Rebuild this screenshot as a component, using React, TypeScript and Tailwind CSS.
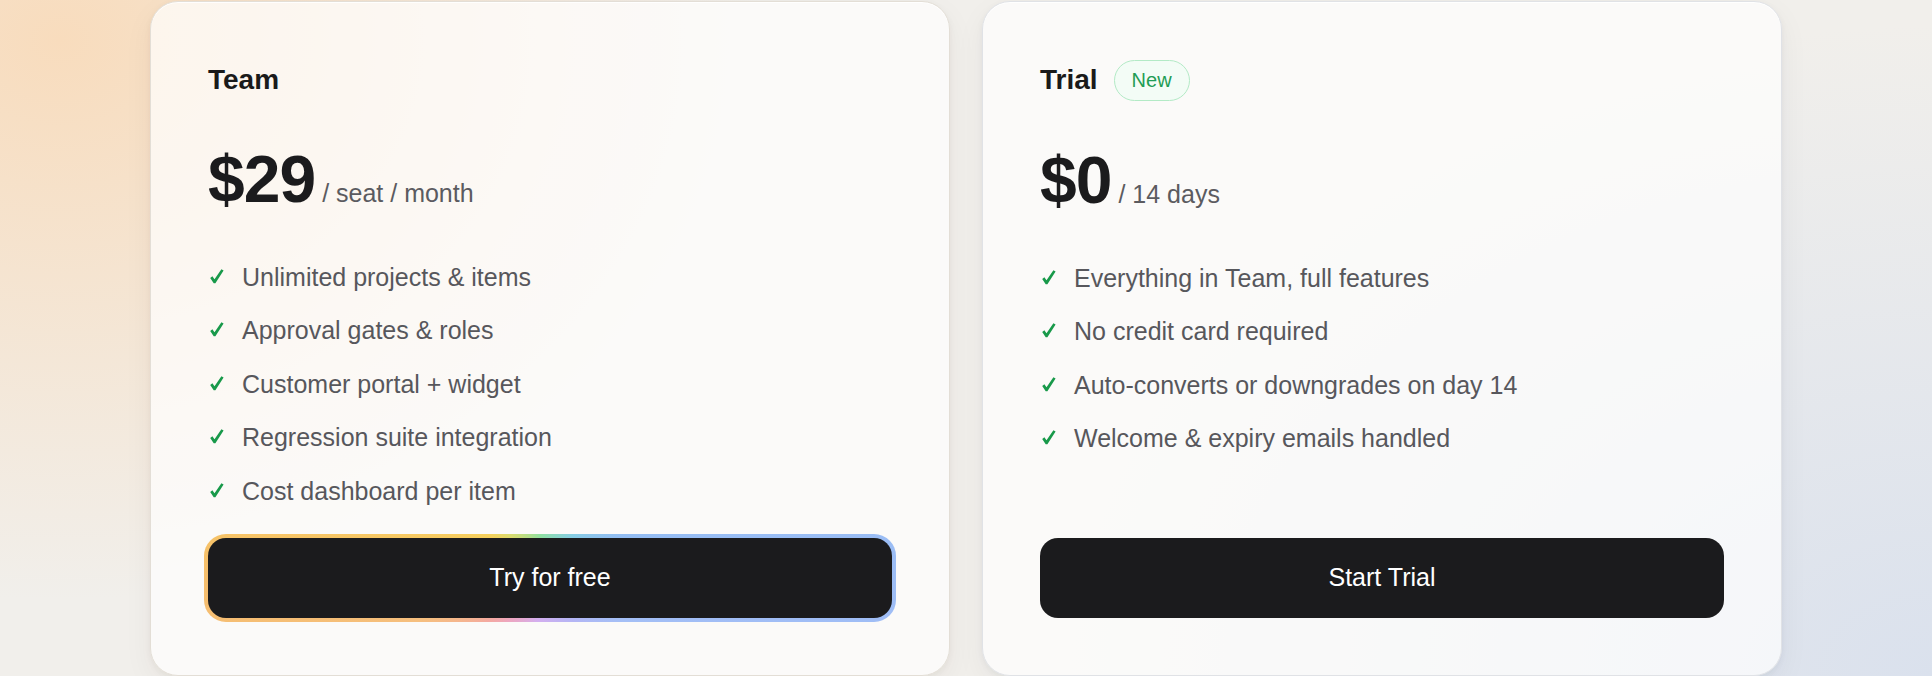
import React from "react";

const teamFeatures = [
  "Unlimited projects & items",
  "Approval gates & roles",
  "Customer portal + widget",
  "Regression suite integration",
  "Cost dashboard per item",
];

const trialFeatures = [
  "Everything in Team, full features",
  "No credit card required",
  "Auto-converts or downgrades on day 14",
  "Welcome & expiry emails handled",
];

function Check() {
  return (
    <svg width="14" height="15" viewBox="0 0 14 15" className="ml-[2px] mt-[10px]" aria-hidden="true">
      <path
        d="M0.2 8.9 L2.4 7.3 L4.5 10.3 L11.4 0.2 L13.6 1.4 L5.4 14.2 L3.7 14.2 Z"
        fill="#18994a"
      />
    </svg>
  );
}

function FeatureList({ items }: { items: string[] }) {
  return (
    <ul className="mt-[46px] flex flex-1 flex-col gap-4">
      {items.map((f) => (
        <li key={f} className="flex items-start">
          <span className="flex w-[34px] shrink-0">
            <Check />
          </span>
          <span className="text-[25px] leading-[1.5] text-[#57575c]">{f}</span>
        </li>
      ))}
    </ul>
  );
}

function Price({ amount, unit }: { amount: string; unit: string }) {
  return (
    <div className="mt-[47px] flex items-baseline">
      <span className="text-[66px] font-bold leading-none tracking-[-0.015em] text-[#1b1b1d]">
        {amount}
      </span>
      <span className="ml-[7px] text-[25px] leading-[1.5] text-[#5b5b60]">{unit}</span>
    </div>
  );
}

export default function App() {
  return (
    <div className="min-h-screen w-full overflow-hidden bg-[#f1efeb] bg-[image:radial-gradient(ellipse_700px_560px_at_60px_40px,#f8dcbd_0%,rgba(248,220,189,0.55)_45%,rgba(248,220,189,0)_100%),radial-gradient(ellipse_900px_650px_at_100%_100%,#dae1ed_0%,rgba(218,225,237,0.5)_50%,rgba(218,225,237,0)_100%)] font-['Liberation_Sans',Arial,sans-serif]">
      <div className="mx-auto grid w-[1632px] grid-cols-2 gap-8 pt-[1px]">
        {/* Team card */}
        <div className="flex h-[675px] flex-col rounded-[28px] border border-[#e3ded6] bg-white/70 px-[57px] pb-[57px] pt-[58px] shadow-[inset_0_1px_0_rgba(255,255,255,0.9),0_2px_6px_rgba(60,40,20,0.05),0_10px_30px_rgba(60,40,20,0.05)]">
          <div className="flex h-[40px] items-center">
            <h3 className="text-[28px] font-bold leading-none text-[#1a1a1a]">Team</h3>
          </div>
          <Price amount="$29" unit="/ seat / month" />
          <FeatureList items={teamFeatures} />
          <div className="-mx-1 -mb-1 mt-[24px] rounded-[22px] bg-[image:conic-gradient(from_0deg_at_50%_50%,#8cdab8_0deg,#86cde4_29deg,#93bdf3_60deg,#a0bdf6_100deg,#a4bff6_120deg,#b4b5f5_151deg,#d4aeef_197deg,#eda6c0_224deg,#f4a9a2_235deg,#f6bf7f_252deg,#f5bd6b_270deg,#f7c964_285deg,#f5d05c_305deg,#dcdb6e_316deg,#8fe0a0_347deg,#8cdab8_360deg)] p-1">
            <button className="flex h-[80px] w-full items-center justify-center rounded-[18px] bg-[#1b1b1d] text-[25px] text-white">
              Try for free
            </button>
          </div>
        </div>

        {/* Trial card */}
        <div className="flex h-[675px] flex-col rounded-[28px] border border-[#e0e2e6] bg-white/70 px-[57px] pb-[57px] pt-[58px] shadow-[inset_0_1px_0_rgba(255,255,255,0.9),0_2px_6px_rgba(20,30,60,0.05),0_10px_30px_rgba(20,30,60,0.05)]">
          <div className="flex h-[40px] items-center gap-4">
            <h3 className="text-[28px] font-bold leading-none text-[#1a1a1a]">Trial</h3>
            <span className="flex h-[41px] items-center rounded-full border-[1.5px] border-[#b3eac6] bg-[#f3fcf6] px-[17px] text-[20px] text-[#1f9d55]">
              New
            </span>
          </div>
          <Price amount="$0" unit="/ 14 days" />
          <FeatureList items={trialFeatures} />
          <button className="mt-[28px] flex h-[80px] w-full shrink-0 items-center justify-center rounded-[18px] bg-[#1b1b1d] text-[25px] text-white">
            Start Trial
          </button>
        </div>
      </div>
    </div>
  );
}
